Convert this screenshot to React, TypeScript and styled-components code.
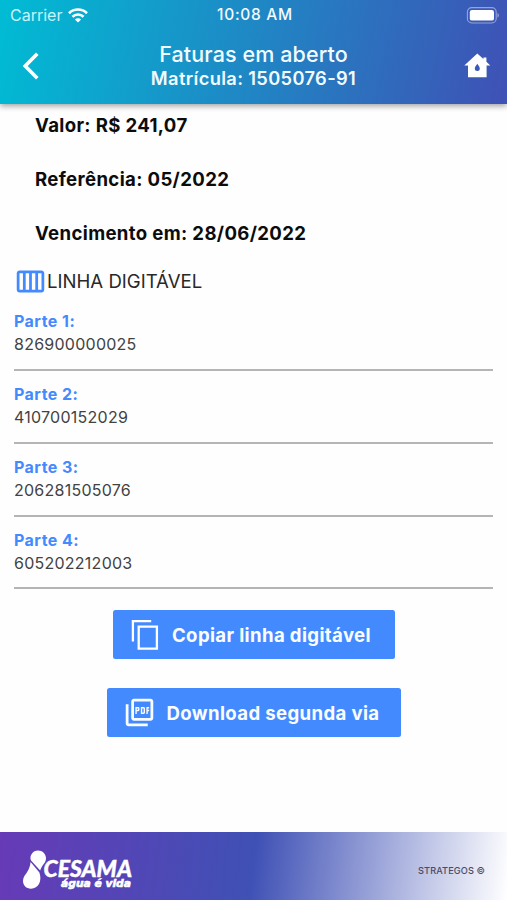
import React from "react";
import styled, { createGlobalStyle } from "styled-components";
import { MdOutlineCalendarViewWeek, MdOutlinePictureAsPdf } from "react-icons/md";

const GlobalStyle = createGlobalStyle`
  * { box-sizing: border-box; }
  body { margin: 0; background: #fff; font-family: Inter, Roboto, sans-serif; }
`;

const Screen = styled.div`
  width: 507px;
  height: 900px;
  display: flex;
  flex-direction: column;
  background: #fefefe;
  overflow: hidden;
`;

const Header = styled.header`
  height: 103.5px;
  flex: none;
  color: #f2fbff;
  background: linear-gradient(101.5deg, #00bcd4, #3f51b5);
  box-shadow: 0 2px 6px rgba(0, 0, 0, 0.38);
`;

const StatusBar = styled.div`
  height: 30px;
  padding: 0 7px 0 10px;
  display: grid;
  grid-template-columns: 1fr auto 1fr;
  align-items: center;
`;

const Carrier = styled.div`
  display: flex;
  align-items: center;
  gap: 6px;
  font-size: 16px;
  line-height: 20px;
  letter-spacing: 0;
  color: #c9f3fa;
`;

const Clock = styled.time`
  font-size: 15.5px;
  line-height: 20px;
  font-weight: 500;
  letter-spacing: 0.7px;
`;

const BatterySlot = styled.div`
  display: flex;
  justify-content: flex-end;
`;

const NavBar = styled.div`
  height: 71px;
  padding: 0 16px 0 22px;
  display: grid;
  grid-template-columns: 60px 1fr 66px;
  align-items: center;
`;

const IconButton = styled.button<{ $align: "start" | "end" }>`
  border: 0;
  padding: 0;
  background: none;
  color: #fff;
  display: flex;
  justify-content: ${(p) => p.$align};
`;

const Titles = styled.div`
  display: flex;
  flex-direction: column;
  align-items: center;
  white-space: nowrap;
`;

const Title = styled.h1`
  margin: 0;
  font-size: 21.5px;
  line-height: 24px;
  font-weight: 500;
  letter-spacing: 0.1px;
`;

const Subtitle = styled.div`
  font-size: 18.3px;
  line-height: 24px;
  font-weight: 600;
  letter-spacing: 0.35px;
`;

const Content = styled.main`
  flex: 1;
  padding: 0 14px;
`;

const Facts = styled.div`
  padding: 9.5px 0 0 21px;
  display: flex;
  flex-direction: column;
  gap: 30px;
`;

const Fact = styled.div`
  font-size: 18.6px;
  line-height: 24px;
  font-weight: 700;
  letter-spacing: 0.35px;
  color: #0c0c0c;
`;

const SectionTitle = styled.h2`
  margin: 20px 0 0;
  height: 32px;
  display: flex;
  align-items: center;
  font-size: 18.6px;
  font-weight: 400;
  color: #282828;
  svg { color: #448aff; flex: none; }
`;

const Parts = styled.div`
  padding-top: 1.2px;
`;

const Part = styled.div`
  height: 72.8px;
  padding-top: 13.2px;
  border-bottom: 2px solid #b5b5b5;
`;

const PartLabel = styled.div`
  font-size: 16px;
  line-height: 20px;
  font-weight: 700;
  letter-spacing: 0.45px;
  color: #448aff;
`;

const PartValue = styled.div`
  padding-top: 3px;
  font-size: 16px;
  line-height: 20px;
  letter-spacing: 0.25px;
  color: #424242;
`;

const Actions = styled.div`
  padding-top: 21px;
  display: flex;
  flex-direction: column;
  align-items: center;
  gap: 29.5px;
`;

const ActionButton = styled.button<{ $width: number; $inset: number; $gap: number }>`
  width: ${(p) => p.$width}px;
  height: 48.5px;
  padding: 0 0 0 ${(p) => p.$inset}px;
  border: 0;
  border-radius: 2.5px;
  display: flex;
  align-items: center;
  gap: ${(p) => p.$gap}px;
  background: #448aff;
  color: #fafdff;
  font: 700 18.6px/24px Inter, sans-serif;
  letter-spacing: 0.36px;
  white-space: nowrap;
  svg { flex: none; }
`;

const Footer = styled.footer`
  height: 68px;
  flex: none;
  padding: 8px 22px 0 20px;
  display: flex;
  justify-content: space-between;
  align-items: center;
  background: linear-gradient(97.6deg, #673ab7, #3f51b5 50%, #ffffff);
`;

const Credit = styled.span`
  padding-top: 2px;
  font-size: 9.2px;
  line-height: 12px;
  font-weight: 500;
  letter-spacing: 0.1px;
  color: #4b4c63;
`;

const WifiIcon = () => (
  <svg width="20" height="15" viewBox="0 0 20 15" fill="none" stroke="#fff" strokeWidth="2.6">
    <path d="M1 5.2C6 .3 14 .3 19 5.2" />
    <path d="M4.4 8.8C7.6 5.8 12.4 5.8 15.6 8.8" />
    <path d="M10 14.6 6.9 11.4C8.7 9.8 11.3 9.8 13.1 11.4Z" fill="#fff" stroke="none" />
  </svg>
);

const BatteryIcon = () => (
  <svg width="34" height="17" viewBox="0 0 34 17">
    <rect x="1.4" y="0.6" width="28.8" height="15.4" rx="4.4" fill="none" stroke="#fff" strokeOpacity=".45" strokeWidth="1.1" />
    <rect x="3.8" y="3" width="24.2" height="10.6" rx="2.2" fill="#fff" />
    <path d="M31.5 6v4.8c1.8-.8 1.8-4 0-4.8Z" fill="#fff" fillOpacity=".5" />
  </svg>
);

const BackIcon = () => (
  <svg width="18" height="28" viewBox="0 0 18 28" fill="none" stroke="#fff" strokeWidth="3.6">
    <path d="M15.3 1.8 3.2 14l12.1 12.2" />
  </svg>
);

const HomeDropIcon = () => (
  <svg width="28" height="26" viewBox="0 0 28 26">
    <path
      fill="#fff"
      fillRule="evenodd"
      d="M14.300 .5 1.300 12.500H5v11.700h18.600V12.500h3.700L23.400 8.800V4.600h-3v1.500L14.300 .5Zm0 10.300c1.400 2 2.500 3.300 2.500 4.700a2.500 2.500 0 0 1-5 0c0-1.400 1.100-2.700 2.500-4.700Z"
    />
  </svg>
);

const CopyIcon = () => (
  <svg width="29" height="32" viewBox="0 0 29 32" fill="none" stroke="#fff" strokeWidth="2.3">
    <path d="M1.900 22.500V2.200h18.300" />
    <path d="M7.700 7.700h18.200v22H7.700Z" />
  </svg>
);

const CesamaLogo = () => (
  <svg width="116" height="44" viewBox="0 0 116 44" fill="#fff">
    <path d="M18 2.500c4.500 0 8 3.400 8 7.800 0 3-1.400 4.600-3 6.700-1.300 1.800-2.200 3.400-2.800 5.600L11 12.500C9 7.500 13 2.500 18 2.500Z" />
    <path d="M10.600 14 19.400 24.500C22.400 33 18.500 40.700 11 40.700c-4.700 0-8-3.300-8-7.700 0-3.600 1.700-5.500 3.700-8.300 2.300-3.300 3.300-6 3.900-10.700Z" />
    <text x="23.500" y="29" fontFamily="Lato, sans-serif" fontWeight="900" fontStyle="italic" fontSize="22" stroke="#fff" strokeWidth=".4" textLength="88.500" lengthAdjust="spacingAndGlyphs">
      CESAMA
    </text>
    <text x="41" y="39" fontFamily="'DejaVu Sans', sans-serif" fontWeight="700" fontStyle="italic" fontSize="10" stroke="#fff" strokeWidth=".6" textLength="70" lengthAdjust="spacingAndGlyphs">
      água é vida
    </text>
  </svg>
);

const facts = ["Valor: R$ 241,07", "Referência: 05/2022", "Vencimento em: 28/06/2022"];
const parts = ["826900000025", "410700152029", "206281505076", "605202212003"];

export default function App() {
  return (
    <Screen>
      <GlobalStyle />
      <Header>
        <StatusBar>
          <Carrier>
            Carrier
            <WifiIcon />
          </Carrier>
          <Clock>10:08 AM</Clock>
          <BatterySlot>
            <BatteryIcon />
          </BatterySlot>
        </StatusBar>
        <NavBar>
          <IconButton $align="start" aria-label="Voltar">
            <BackIcon />
          </IconButton>
          <Titles>
            <Title>Faturas em aberto</Title>
            <Subtitle>Matrícula: 1505076-91</Subtitle>
          </Titles>
          <IconButton $align="end" aria-label="Início">
            <HomeDropIcon />
          </IconButton>
        </NavBar>
      </Header>
      <Content>
        <Facts>
          {facts.map((fact) => (
            <Fact key={fact}>{fact}</Fact>
          ))}
        </Facts>
        <SectionTitle>
          <MdOutlineCalendarViewWeek size={33} />
          LINHA DIGITÁVEL
        </SectionTitle>
        <Parts>
          {parts.map((value, i) => (
            <Part key={value}>
              <PartLabel>Parte {i + 1}:</PartLabel>
              <PartValue>{value}</PartValue>
            </Part>
          ))}
        </Parts>
        <Actions>
          <ActionButton $width={282} $inset={18} $gap={12.5}>
            <CopyIcon />
            Copiar linha digitável
          </ActionButton>
          <ActionButton $width={294} $inset={16} $gap={11}>
            <MdOutlinePictureAsPdf size={33} />
            Download segunda via
          </ActionButton>
        </Actions>
      </Content>
      <Footer>
        <CesamaLogo />
        <Credit>STRATEGOS ©</Credit>
      </Footer>
    </Screen>
  );
}
